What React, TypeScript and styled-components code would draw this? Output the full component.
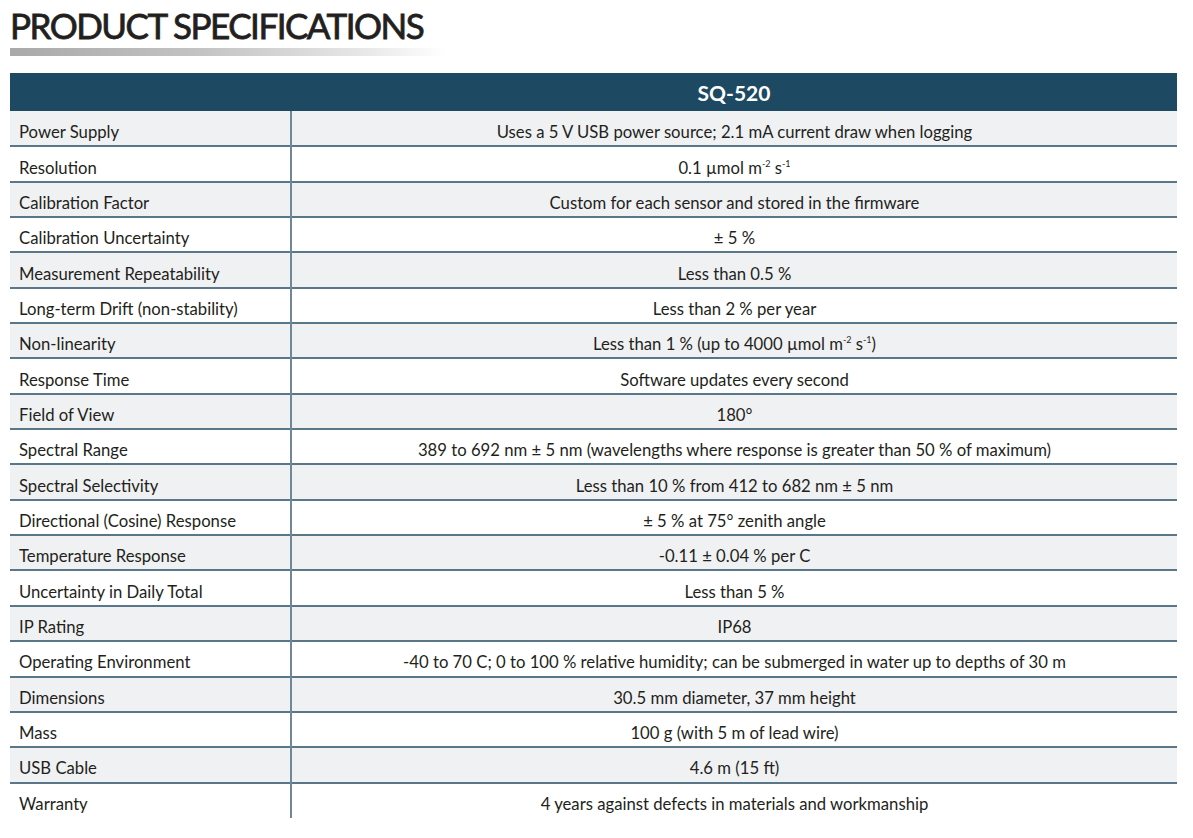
import React from 'react'
import styled, { createGlobalStyle } from 'styled-components'

interface Spec {
    label: string
    value: React.ReactNode
}

const specs: Spec[] = [
    { label: 'Power Supply', value: 'Uses a 5 V USB power source; 2.1 mA current draw when logging' },
    { label: 'Resolution', value: <>0.1 µmol m<sup>-2</sup> s<sup>-1</sup></> },
    { label: 'Calibration Factor', value: 'Custom for each sensor and stored in the firmware' },
    { label: 'Calibration Uncertainty', value: '± 5 %' },
    { label: 'Measurement Repeatability', value: 'Less than 0.5 %' },
    { label: 'Long-term Drift (non-stability)', value: 'Less than 2 % per year' },
    { label: 'Non-linearity', value: <>Less than 1 % (up to 4000 µmol m<sup>-2</sup> s<sup>-1</sup>)</> },
    { label: 'Response Time', value: 'Software updates every second' },
    { label: 'Field of View', value: '180°' },
    { label: 'Spectral Range', value: '389 to 692 nm ± 5 nm (wavelengths where response is greater than 50 % of maximum)' },
    { label: 'Spectral Selectivity', value: 'Less than 10 % from 412 to 682 nm ± 5 nm' },
    { label: 'Directional (Cosine) Response', value: '± 5 % at 75° zenith angle' },
    { label: 'Temperature Response', value: '-0.11 ± 0.04 % per C' },
    { label: 'Uncertainty in Daily Total', value: 'Less than 5 %' },
    { label: 'IP Rating', value: 'IP68' },
    { label: 'Operating Environment', value: '-40 to 70 C; 0 to 100 % relative humidity; can be submerged in water up to depths of 30 m' },
    { label: 'Dimensions', value: '30.5 mm diameter, 37 mm height' },
    { label: 'Mass', value: '100 g (with 5 m of lead wire)' },
    { label: 'USB Cable', value: '4.6 m (15 ft)' },
    { label: 'Warranty', value: '4 years against defects in materials and workmanship' },
]

export default function App() {
    return (
        <Page>
            <GlobalStyle />
            <Title>PRODUCT SPECIFICATIONS</Title>
            <TitleBar />
            <SpecTable>
                <thead>
                    <tr>
                        <HeadCell />
                        <HeadCell>SQ-520</HeadCell>
                    </tr>
                </thead>
                <tbody>
                    {specs.map((s, i) => (
                        <Row key={s.label} $shaded={i % 2 === 0}>
                            <LabelCell>{s.label}</LabelCell>
                            <ValueCell>{s.value}</ValueCell>
                        </Row>
                    ))}
                </tbody>
            </SpecTable>
        </Page>
    )
}

const GlobalStyle = createGlobalStyle`
    body {
        margin: 0;
        background: #fff;
        font-family: Lato, 'Open Sans', sans-serif;
        color: #231f20;
    }
`
const Page = styled.div`
    padding: 0 16px 0 10px;
`
const Title = styled.h1`
    margin: 0;
    padding-top: 4px;
    font-size: 35px;
    line-height: 42px;
    font-weight: 400;
    letter-spacing: -1.5px;
    -webkit-text-stroke: 0.8px #231f20;
    color: #231f20;
`
const TitleBar = styled.div`
    width: 436px;
    height: 8px;
    margin-top: 2px;
    background: linear-gradient(to right, #a9a9a9 0%, #c4c4c4 45%, #e6e6e6 80%, #ffffff 100%);
`
const SpecTable = styled.table`
    width: 1167px;
    margin-top: 17px;
    border-collapse: collapse;
    font-size: 16.7px;
`
const HeadCell = styled.th`
    height: 38px;
    padding: 0;
    background: #1d4a62;
    color: #fff;
    font-size: 21px;
    font-weight: 700;
    text-align: center;
    &:first-child {
        width: 281px;
    }
`
const Row = styled.tr<{ $shaded: boolean }>`
    height: 35.35px;
    background: ${p => (p.$shaded ? '#f0f1f3' : '#fff')};
    border-bottom: 2px solid #5a7789;
    &:last-child {
        border-bottom: none;
    }
    sup {
        font-size: 9px;
        line-height: 0;
        vertical-align: 7px;
    }
`
const LabelCell = styled.td`
    padding: 7px 0 0 9px;
    border-right: 2px solid #6f8898;
    text-align: left;
`
const ValueCell = styled.td`
    padding: 7px 0 0;
    text-align: center;
`
